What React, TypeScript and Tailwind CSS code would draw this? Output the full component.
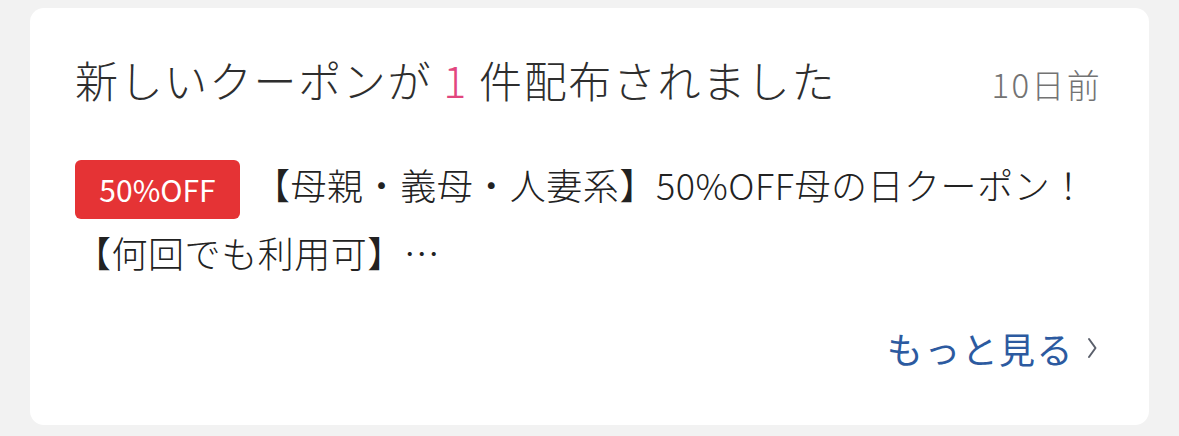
import React from "react";

export default function App() {
  const font = { fontFamily: '"Noto Sans CJK JP", "Noto Sans", sans-serif' };
  return (
    <div className="w-[1179px] h-[436px] bg-[#f2f2f2] pt-[8px] px-[30px]" style={font}>
      <div className="h-[417px] bg-white rounded-[14px] pl-[45px] pr-[47px] pt-[43px]">
        <div className="flex items-baseline justify-between h-[56px]">
          <div className="text-[43px] leading-[56px] text-[#2e2e2e] tracking-[0.038em] font-light">
            新しいクーポンが <span className="text-[#e2467e]">1</span> 件配布されました
          </div>
          <div className="text-[33px] leading-[56px] text-[#737373] tracking-[0.07em] font-light">10日前</div>
        </div>
        <div className="mt-[45px] text-[36px] leading-[64px] text-[#222222] tracking-[0.015em] font-light">
          <span className="inline-flex items-center justify-center align-middle h-[59px] w-[165px] mr-[14px] rounded-[6px] bg-[#e53335] text-white text-[30px] leading-none font-normal tracking-normal relative -top-[1px]">
            50%OFF
          </span>
          【母親・義母・人妻系】50%OFF母の日クーポン！
          <br />
          【何回でも利用可】…
        </div>
        <div className="mt-[40px] flex justify-end items-center text-[36px] leading-[48px] text-[#2c5aa0] tracking-[0.04em] font-normal">
          もっと見る
          <svg width="20" height="28" viewBox="0 0 20 28" className="ml-[8px]">
            <path d="M7 5 L13.5 14 L7 23" fill="none" stroke="#5a5f6b" strokeWidth="2" strokeLinecap="round" strokeLinejoin="round" />
          </svg>
        </div>
      </div>
    </div>
  );
}
